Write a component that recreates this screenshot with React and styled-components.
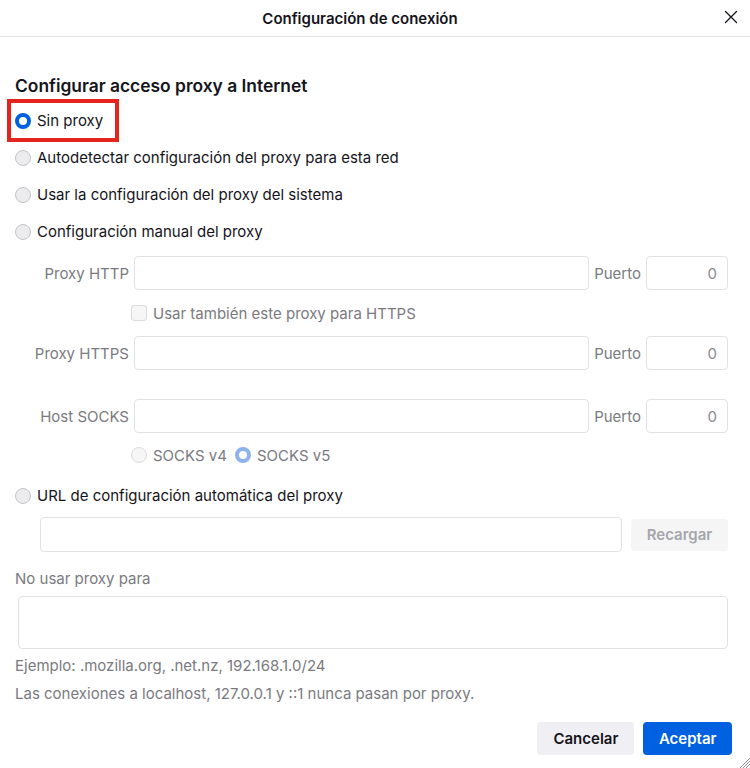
import React from 'react';
import styled, { createGlobalStyle, css } from 'styled-components';

const GlobalStyle = createGlobalStyle`
  html, body {
    margin: 0;
    background: #fff;
  }
  body {
    font-family: Inter, "Noto Sans", sans-serif;
    color: #15141a;
  }
`;

const Dialog = styled.div`
  position: relative;
  width: 750px;
  height: 768px;
  background: #fff;
  overflow: hidden;
`;

const Header = styled.div`
  height: 36px;
  border-bottom: 1px solid #e4e4e8;
  display: flex;
  align-items: center;
  justify-content: center;
  padding-right: 30px;
  position: relative;
`;

const Title = styled.div`
  font-size: 15px;
  font-weight: 600;
`;

const CloseButton = styled.button`
  position: absolute;
  right: 10px;
  top: 8px;
  width: 18px;
  height: 18px;
  border: 0;
  padding: 0;
  background: none;
  display: flex;
  align-items: center;
  justify-content: center;
`;

const Body = styled.div`
  padding: 0 22px 0 15px;
  display: flex;
  flex-direction: column;
`;

const Heading = styled.h2`
  margin: 38px 0 5px;
  font-size: 17.4px;
  line-height: 22px;
  font-weight: 600;
`;

const OptionRow = styled.label`
  position: relative;
  display: flex;
  align-items: center;
  gap: 6px;
  height: 37px;
  font-size: 15px;
  align-self: flex-start;
  ${(p) =>
    p.$highlight &&
    css`
      &::after {
        content: '';
        position: absolute;
        left: -8px;
        top: -3px;
        width: 104px;
        height: 35px;
        border: 4px solid #e5241d;
      }
    `}
`;

const Radio = styled.span`
  box-sizing: border-box;
  width: 16px;
  height: 16px;
  border-radius: 50%;
  flex: none;
  ${(p) =>
    p.$checked
      ? css`
          border: 4px solid ${p.$disabled ? '#8eb2ec' : '#0061e0'};
          background: #fff;
        `
      : css`
          border: 1px solid ${p.$disabled ? '#dcdcde' : '#c4c4c8'};
          background: ${p.$disabled ? '#f6f6f7' : '#ececee'};
        `}
`;

const Checkbox = styled.span`
  box-sizing: border-box;
  width: 16px;
  height: 16px;
  border-radius: 3px;
  border: 1px solid #dcdcde;
  background: #f6f6f7;
  flex: none;
`;

const FieldRow = styled.div`
  display: grid;
  grid-template-columns: 114px 1fr auto 82px;
  column-gap: 5px;
  align-items: center;
  height: 34px;
  margin-top: ${(p) => p.$top || 0}px;
`;

const FieldLabel = styled.span`
  font-size: 15px;
  color: #7a7a80;
  text-align: ${(p) => (p.$right ? 'right' : 'left')};
`;

const Input = styled.div`
  box-sizing: border-box;
  height: ${(p) => p.$height || 34}px;
  border: 1px solid #e2e2e6;
  border-radius: 4px;
  background: #fff;
  font-size: 15px;
  color: #8a8a90;
  display: flex;
  align-items: center;
  justify-content: flex-end;
  padding: 0 10px;
  ${(p) => p.$grow && 'flex: 1;'}
`;

const SubRow = styled.div`
  display: flex;
  align-items: center;
  gap: 6px;
  height: ${(p) => p.$height}px;
  padding-left: 116px;
  font-size: 15px;
  color: #7a7a80;
`;

const SubOption = styled.span`
  display: flex;
  align-items: center;
  gap: 6px;
  margin-right: 2px;
`;

const UrlRow = styled.div`
  display: flex;
  align-items: center;
  gap: 9px;
  margin: 3px 0 0 25px;
`;

const GhostButton = styled.button`
  width: 97px;
  height: 32px;
  border: 0;
  border-radius: 4px;
  background: #f5f5f6;
  color: #a6a6ab;
  font: 600 15px Inter, sans-serif;
  flex: none;
`;

const Note = styled.div`
  font-size: 15px;
  line-height: 20px;
  color: #7a7a80;
  margin-top: ${(p) => p.$top}px;
`;

const TextArea = styled.div`
  box-sizing: border-box;
  height: 53px;
  margin: 7px 0 0 3px;
  border: 1px solid #e2e2e6;
  border-radius: 4px;
`;

const Footer = styled.div`
  display: flex;
  justify-content: flex-end;
  gap: 9px;
  margin: 18px -4px 0 0;
`;

const Button = styled.button`
  height: 33px;
  padding: 0 ${(p) => (p.$primary ? 15.5 : 16)}px;
  border: 0;
  border-radius: 4px;
  font: 600 15px Inter, sans-serif;
  background: ${(p) => (p.$primary ? '#0061e0' : '#f0f0f4')};
  color: ${(p) => (p.$primary ? '#fff' : '#15141a')};
`;

const Grip = styled.svg`
  position: absolute;
  right: 0;
  bottom: 0;
`;

const options = [
  { label: 'Sin proxy', checked: true, highlight: true },
  { label: 'Autodetectar configuración del proxy para esta red', wide: true },
  { label: 'Usar la configuración del proxy del sistema' },
  { label: 'Configuración manual del proxy' },
];

const ProxyField = ({ label, top }) => (
  <FieldRow $top={top}>
    <FieldLabel $right>{label}</FieldLabel>
    <Input />
    <FieldLabel>Puerto</FieldLabel>
    <Input>0</Input>
  </FieldRow>
);

export default function App() {
  return (
    <Dialog>
      <GlobalStyle />
      <Header>
        <Title>Configuración de conexión</Title>
        <CloseButton aria-label="Cerrar">
          <svg width="14" height="14" viewBox="0 0 14 14">
            <path d="M1.5 1.5l11 11M12.5 1.5l-11 11" stroke="#15141a" strokeWidth="1.3" strokeLinecap="round" />
          </svg>
        </CloseButton>
      </Header>
      <Body>
        <Heading>Configurar acceso proxy a Internet</Heading>
        {options.map((o) => (
          <OptionRow key={o.label} $highlight={o.highlight}>
            <Radio $checked={o.checked} />
            {o.label}
          </OptionRow>
        ))}
        <ProxyField label="Proxy HTTP" top={6} />
        <SubRow $height={46}>
          <Checkbox />
          Usar también este proxy para HTTPS
        </SubRow>
        <ProxyField label="Proxy HTTPS" />
        <ProxyField label="Host SOCKS" top={29} />
        <SubRow $height={44}>
          <SubOption>
            <Radio $disabled />
            SOCKS v4
          </SubOption>
          <SubOption>
            <Radio $disabled $checked />
            SOCKS v5
          </SubOption>
        </SubRow>
        <OptionRow>
          <Radio />
          URL de configuración automática del proxy
        </OptionRow>
        <UrlRow>
          <Input $height={35} $grow />
          <GhostButton>Recargar</GhostButton>
        </UrlRow>
        <Note $top={17}>No usar proxy para</Note>
        <TextArea />
        <Note $top={7}>Ejemplo: .mozilla.org, .net.nz, 192.168.1.0/24</Note>
        <Note $top={8}>Las conexiones a localhost, 127.0.0.1 y ::1 nunca pasan por proxy.</Note>
        <Footer>
          <Button>Cancelar</Button>
          <Button $primary>Aceptar</Button>
        </Footer>
      </Body>
      <Grip width="14" height="14" viewBox="0 0 14 14">
        <path d="M4 14L14 4M7 14L14 7M10 14L14 10" stroke="#8a8a90" strokeWidth="1" />
      </Grip>
    </Dialog>
  );
}
